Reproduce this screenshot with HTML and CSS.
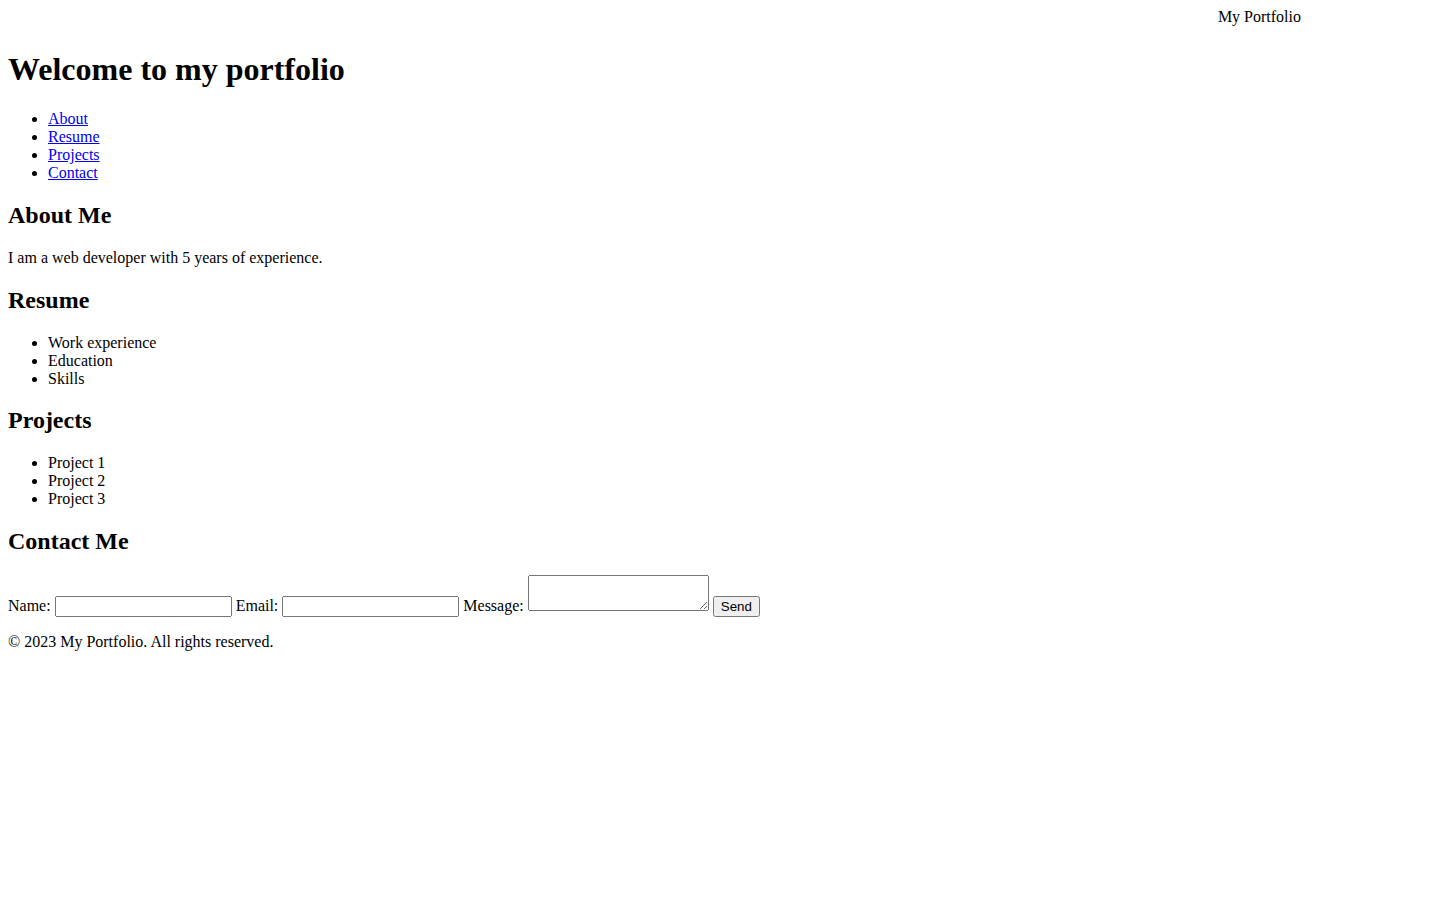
FILE: index.html
```html
<!DOCTYPE html>
<html lang="en">
<head>
<meta charset="utf-8">
<title>My Portfolio</title>
<link rel="stylesheet" href="styles.css">
</head>
<body>
<header class="site-header">
  <div class="brand">My Portfolio</div>
</header>
<h1>Welcome to my portfolio</h1>
<nav>
  <ul>
    <li><a href="#about">About</a></li>
    <li><a href="#resume">Resume</a></li>
    <li><a href="#projects">Projects</a></li>
    <li><a href="#contact">Contact</a></li>
  </ul>
</nav>
<section id="about">
  <h2>About Me</h2>
  <p>I am a web developer with 5 years of experience.</p>
</section>
<section id="resume">
  <h2>Resume</h2>
  <ul>
    <li>Work experience</li>
    <li>Education</li>
    <li>Skills</li>
  </ul>
</section>
<section id="projects">
  <h2>Projects</h2>
  <ul>
    <li>Project 1</li>
    <li>Project 2</li>
    <li>Project 3</li>
  </ul>
</section>
<section id="contact">
  <h2>Contact Me</h2>
  <form>
    <label for="name">Name:</label>
    <input type="text" id="name" class="field">
    <label for="email">Email:</label>
    <input type="email" id="email" class="field">
    <label for="message">Message:</label>
    <textarea id="message"></textarea>
    <button type="submit">Send</button>
  </form>
</section>
<footer>
  <p>&copy; 2023 My Portfolio. All rights reserved.</p>
</footer>
</body>
</html>
```
FILE: styles.css
```css
body {
  font-family: "Liberation Serif", "Times New Roman", serif;
}
.site-header {
  display: flex;
  justify-content: flex-end;
  padding-right: 131px;
  padding-bottom: 4px;
}
input,
button {
  font-family: "Liberation Sans", Arial, sans-serif;
}
.field {
  width: 169px;
}
textarea {
  font-family: "Liberation Mono", "Courier New", monospace;
}
```
